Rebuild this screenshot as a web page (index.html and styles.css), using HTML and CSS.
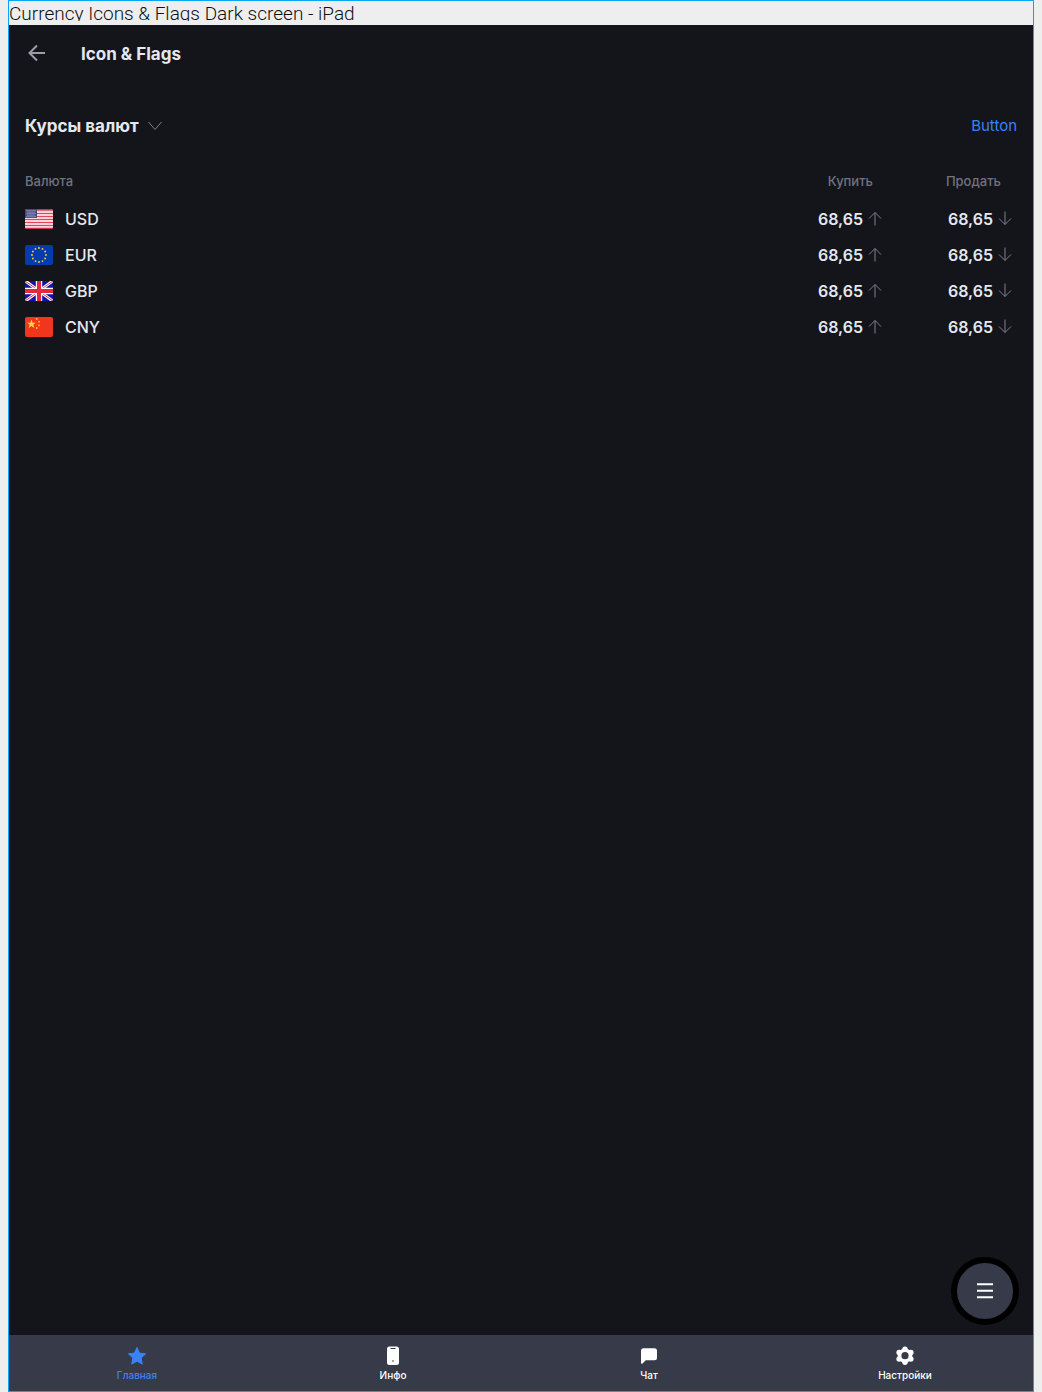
FILE: index.html
```html
<!DOCTYPE html>
<html lang="ru">
<head>
<meta charset="utf-8">
<meta name="viewport" content="width=device-width, initial-scale=1">
<title>Currency Icons &amp; Flags Dark screen - iPad</title>
<link rel="stylesheet" href="styles.css">
</head>
<body>
<svg width="0" height="0" class="sprite" aria-hidden="true">
  <symbol id="up" viewBox="0 0 16 16"><path d="M8 14.500V1.500M2 7.500l6-6 6 6"/></symbol>
  <symbol id="down" viewBox="0 0 16 16"><path d="M8 .5v13M2 7.500l6 6 6-6"/></symbol>
</svg>
<div class="frame">
  <div class="frame-label">Currency Icons &amp; Flags Dark screen - iPad</div>
  <div class="screen">
    <header class="app-bar">
      <button class="icon-button" type="button" aria-label="Назад">
        <svg class="back-icon" viewBox="0 0 24 24"><path d="M20 12H5.500M12 4.500L4.500 12l7.500 7.500"/></svg>
      </button>
      <h1 class="app-title">Icon &amp; Flags</h1>
    </header>
    <main class="content">
      <div class="section-head">
        <h2 class="section-title">
          <button class="section-toggle" type="button">Курсы валют
            <svg class="chevron" viewBox="0 0 16 16"><path d="M1.500 4L8 11.500 14.500 4"/></svg>
          </button>
        </h2>
        <button class="text-button" type="button">Button</button>
      </div>
      <table class="rates">
        <thead>
          <tr><th class="name" scope="col">Валюта</th><th class="buy" scope="col">Купить</th><th class="sell" scope="col">Продать</th></tr>
        </thead>
        <tbody>
          <tr>
            <td><div class="currency">
              <svg class="flag" viewBox="0 0 28 20">
                <rect width="28" height="20" fill="#f3a6b2"/>
                <path d="M0 .7h28M0 19.300h28" stroke="#d02f44" stroke-width="1.400"/>
                <path d="M0 4.500h28M0 7.500h28M0 10.500h28M0 13.500h28M0 16.500h28" stroke="#e0455c" stroke-width="1.200"/>
                <path d="M0 3h28M0 6h28M0 9h28M0 12h28M0 15h28M0 18h28" stroke="#fff" stroke-width="1"/>
                <rect width="12" height="9" fill="#46467f"/>
                <path d="M1.500 1.700h10M2.500 3.200h8M1.500 4.700h10M2.500 6.200h8M1.500 7.700h10" stroke="#c3c3dc" stroke-width="1" stroke-dasharray="1 1"/>
              </svg>USD</div></td>
            <td><div class="rate">68,65<svg class="arrow"><use href="#up"/></svg></div></td>
            <td><div class="rate">68,65<svg class="arrow"><use href="#down"/></svg></div></td>
          </tr>
          <tr>
            <td><div class="currency">
              <svg class="flag" viewBox="0 0 28 20">
                <rect width="28" height="20" fill="#043cae"/>
                <g fill="#ffd429"><circle cx="14" cy="3" r=".9"/><circle cx="17.500" cy="3.900" r=".9"/><circle cx="20.100" cy="6.500" r=".9"/><circle cx="21" cy="10" r=".9"/><circle cx="20.100" cy="13.500" r=".9"/><circle cx="17.500" cy="16.100" r=".9"/><circle cx="14" cy="17" r=".9"/><circle cx="10.500" cy="16.100" r=".9"/><circle cx="7.900" cy="13.500" r=".9"/><circle cx="7" cy="10" r=".9"/><circle cx="7.900" cy="6.500" r=".9"/><circle cx="10.500" cy="3.900" r=".9"/></g>
              </svg>EUR</div></td>
            <td><div class="rate">68,65<svg class="arrow"><use href="#up"/></svg></div></td>
            <td><div class="rate">68,65<svg class="arrow"><use href="#down"/></svg></div></td>
          </tr>
          <tr>
            <td><div class="currency">
              <svg class="flag" viewBox="0 0 28 20">
                <rect width="28" height="20" fill="#0a17a7"/>
                <path d="M-1-1l30 22M29-1L-1 21" stroke="#fff" stroke-width="3"/>
                <path d="M0 0l10 7M28 0L18 7M0 20l10-7M28 20l-10-7" stroke="#e6273e" stroke-width="1"/>
                <path d="M14 0v20M0 10h28" stroke="#fff" stroke-width="6.400"/>
                <path d="M14 0v20M0 10h28" stroke="#e6273e" stroke-width="4"/>
              </svg>GBP</div></td>
            <td><div class="rate">68,65<svg class="arrow"><use href="#up"/></svg></div></td>
            <td><div class="rate">68,65<svg class="arrow"><use href="#down"/></svg></div></td>
          </tr>
          <tr>
            <td><div class="currency">
              <svg class="flag" viewBox="0 0 28 20">
                <rect width="28" height="20" fill="#f1361d"/>
                <path fill="#ffd940" d="M6.500 2.600l1.100 3.100h3.300L8.300 7.700l1 3.200-2.800-1.900-2.800 1.900 1-3.200-2.600-2h3.300z"/>
                <g fill="#ffc938"><circle cx="11.700" cy="2" r=".9"/><circle cx="14" cy="4.700" r=".9"/><circle cx="14" cy="8.300" r=".9"/><circle cx="11.700" cy="11" r=".9"/></g>
              </svg>CNY</div></td>
            <td><div class="rate">68,65<svg class="arrow"><use href="#up"/></svg></div></td>
            <td><div class="rate">68,65<svg class="arrow"><use href="#down"/></svg></div></td>
          </tr>
        </tbody>
      </table>
      <button class="fab" type="button" aria-label="Меню">
        <svg class="fab-icon" viewBox="0 0 24 24"><path d="M4 5.300h16M4 11.800h16M4 18.200h16"/></svg>
      </button>
    </main>
    <nav class="tab-bar">
      <a class="tab active" href="#home" aria-current="page">
        <svg class="tab-icon" viewBox="0 0 20 20"><path d="M10 1.500l2.500 5.600 6.100.7-4.500 4.200 1.200 6.100L10 15.200l-5.300 2.900 1.200-6.100L1.400 7.800l6.100-.7z" stroke="currentColor" stroke-linejoin="round"/></svg>
        Главная
      </a>
      <a class="tab" href="#info">
        <svg class="tab-icon" viewBox="0 0 20 20"><rect x="4" y=".5" width="12" height="18.500" rx="2.500"/><path d="M8 2.500h4" stroke="#373a49" stroke-width="1.200" stroke-linecap="round"/><circle cx="10" cy="15" r="1" fill="#85868f"/></svg>
        Инфо
      </a>
      <a class="tab" href="#chat">
        <svg class="tab-icon" viewBox="0 0 20 20"><path d="M4.500 2.200h11A2.500 2.500 0 0 1 18 4.700v7a2.500 2.500 0 0 1-2.500 2.500H6.800l-3.300 3.200c-.6.5-1.500.2-1.500-.7v-12a2.500 2.500 0 0 1 2.500-2.500z"/></svg>
        Чат
      </a>
      <a class="tab" href="#settings">
        <svg class="tab-icon" viewBox="0 0 20 20"><g><circle cx="10" cy="9.700" r="7.300"/><circle cx="10" cy="3.200" r="2.700"/><circle cx="15.900" cy="6.400" r="2.700"/><circle cx="15.900" cy="13" r="2.700"/><circle cx="10" cy="16.200" r="2.700"/><circle cx="4.100" cy="13" r="2.700"/><circle cx="4.100" cy="6.400" r="2.700"/></g><circle cx="10" cy="9.700" r="3.600" fill="#373a49"/></svg>
        Настройки
      </a>
    </nav>
  </div>
</div>
</body>
</html>
```
FILE: styles.css
```css
* { box-sizing: border-box; }

body {
  margin: 0;
  padding: 0 8px;
  background: #eee;
  font-family: Inter, "Liberation Sans", sans-serif;
}

button {
  padding: 0;
  border: 0;
  background: none;
  color: inherit;
  font: inherit;
  cursor: pointer;
}

svg { display: block; flex: none; }

.sprite { position: absolute; }

.frame {
  display: flex;
  flex-direction: column;
  min-height: 100vh;
  border: 1px solid #0aa5f5;
}

.frame-label {
  height: 20px;
  margin-bottom: 4px;
  overflow: hidden;
  color: #111;
  font: 300 19px/26px Roboto, sans-serif;
  white-space: nowrap;
}

.screen {
  flex: 1;
  display: flex;
  flex-direction: column;
  background: #14151a;
  color: #e4e8f0;
}

.app-bar {
  display: flex;
  align-items: center;
  gap: 32px;
  height: 56px;
  padding: 0 16px;
}

.icon-button, .back-icon { width: 24px; height: 24px; }

.back-icon, .chevron, .arrow, .fab-icon {
  fill: none;
  stroke: #9b9ea9;
  stroke-width: 2;
}

.app-title, .section-title {
  margin: 0;
  padding-top: 2px;
  font-size: 17px;
  font-weight: 700;
  line-height: 24px;
}

.content {
  position: relative;
  flex: 1;
  padding: 32px 16px;
}

.section-head {
  display: flex;
  align-items: center;
  justify-content: space-between;
  height: 24px;
  margin-bottom: 24px;
}

.section-toggle { display: flex; align-items: center; gap: 8px; }

.chevron, .arrow {
  width: 16px;
  height: 16px;
  stroke: #7d818e;
  stroke-width: 1;
}

.text-button {
  padding-top: 2px;
  color: #3a82f7;
  font-size: 15px;
  line-height: 24px;
}

.rates {
  width: 100%;
  border-collapse: collapse;
  table-layout: fixed;
  font-size: 16px;
  font-weight: 500;
}

.rates th {
  height: 40px;
  padding: 0;
  color: #6f7380;
  font-size: 13px;
  font-weight: 500;
  text-align: right;
}

.rates .name { text-align: left; }
.rates .buy { width: 130px; padding-right: 14px; }
.rates .sell { width: 130px; padding-right: 16px; }

.rates td { height: 36px; padding: 0; }

.currency { display: flex; align-items: center; gap: 12px; }

.flag { width: 28px; height: 20px; border-radius: 2px; }

.rate {
  display: flex;
  align-items: center;
  justify-content: flex-end;
  gap: 4px;
  padding-right: 4px;
  font-weight: 600;
}

.fab {
  position: absolute;
  right: 14px;
  bottom: 10px;
  display: grid;
  place-items: center;
  width: 68px;
  height: 68px;
  border: 6px solid #000;
  border-radius: 50%;
  background: #373a49;
}

.fab-icon { width: 24px; height: 24px; stroke: #fff; }

.tab-bar {
  display: grid;
  grid-template-columns: repeat(4, 1fr);
  height: 56px;
  background: #373a49;
}

.tab {
  display: flex;
  flex-direction: column;
  align-items: center;
  gap: 3px;
  padding-top: 11px;
  color: #fff;
  font-size: 10px;
  font-weight: 500;
  line-height: 12px;
  text-decoration: none;
}

.tab.active { color: #3a82f7; }

.tab-icon { width: 20px; height: 20px; fill: currentColor; }
```
